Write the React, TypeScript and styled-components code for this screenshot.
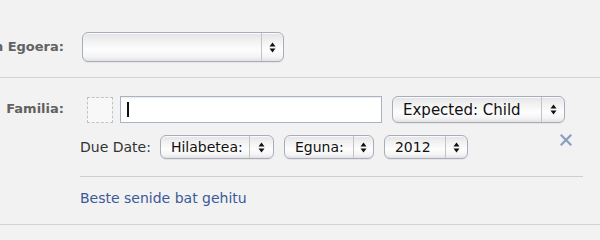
import React from "react";
import styled, { createGlobalStyle } from "styled-components";

const Global = createGlobalStyle`
  html, body { margin: 0; padding: 0; background: #f2f2f2; }
  body { font-family: "DejaVu Sans", "Lucida Grande", Verdana, sans-serif; font-size: 14px; color: #333; }
  * { box-sizing: border-box; }
`;

const Page = styled.div`
  width: 600px;
  height: 229px;
  overflow: hidden;
  background: #f2f2f2;
`;

const TopSection = styled.div`
  height: 78px;
  padding-top: 32px;
  border-bottom: 1px solid #d3d3d3;
`;

const FamilySection = styled.div`
  padding-top: 18px;
  padding-bottom: 17px;
  border-bottom: 1px solid #d3d3d3;
`;

const Row = styled.div<{ $align?: string }>`
  display: flex;
  align-items: ${(p) => p.$align ?? "center"};
`;

const Label = styled.div<{ $pt?: number }>`
  width: 64px;
  flex: none;
  display: flex;
  justify-content: flex-end;
  white-space: nowrap;
  font-weight: bold;
  color: #626262;
  font-size: 13px;
  line-height: 16px;
  padding-top: ${(p) => p.$pt ?? 0}px;
`;

const Content = styled.div`
  margin-left: 16px;
  width: 503px;
  display: flex;
  flex-direction: column;
`;

const SelectBox = styled.div<{ $w: number; $h: number; $ml?: number }>`
  width: ${(p) => p.$w}px;
  height: ${(p) => p.$h}px;
  margin-left: ${(p) => p.$ml ?? 0}px;
  flex: none;
  display: flex;
  border: 1px solid #a6aebd;
  border-radius: 6px;
  background: linear-gradient(to bottom, #e3e3e3 0%, #f0f0f0 25%, #fdfdfd 60%, #f4f4f4 85%, #e2e2e2 100%);
  box-shadow: inset 0 1px 0 rgba(255,255,255,0.8), 0 1px 1px rgba(0,0,0,0.06);
  overflow: hidden;
`;

const SelectText = styled.div<{ $fs: number }>`
  flex: 1;
  display: flex;
  align-items: center;
  padding-left: 10px;
  font-size: ${(p) => p.$fs}px;
  color: #111;
  white-space: nowrap;
`;

const ArrowArea = styled.div<{ $w: number }>`
  width: ${(p) => p.$w}px;
  flex: none;
  border-left: 1px solid #c4c4c4;
  display: flex;
  align-items: center;
  justify-content: center;
`;

const Arrows = () => (
  <svg width="7" height="11" viewBox="0 0 7 11">
    <path d="M3.5 0.5 L6.5 4.5 L0.5 4.5 Z" fill="#111" />
    <path d="M3.5 10.5 L6.5 6.5 L0.5 6.5 Z" fill="#111" />
  </svg>
);

const Select = ({ w, h, aw, ml, fs = 14, children }: { w: number; h: number; aw: number; ml?: number; fs?: number; children?: React.ReactNode }) => (
  <SelectBox $w={w} $h={h} $ml={ml}>
    <SelectText $fs={fs}>{children}</SelectText>
    <ArrowArea $w={aw}>
      <Arrows />
    </ArrowArea>
  </SelectBox>
);

const PhotoSlot = styled.div`
  width: 26px;
  height: 26px;
  margin-left: 7px;
  border: 1px dashed #c2c2c2;
  background: #f8f8f8;
  flex: none;
`;

const NameInput = styled.div`
  width: 262px;
  height: 27px;
  margin-left: 7px;
  flex: none;
  background: #fff;
  border: 1px solid #a9b3c6;
  box-shadow: inset 0 1px 1px rgba(0,0,0,0.08);
  display: flex;
  align-items: center;
  padding-left: 6px;
`;

const Caret = styled.div`
  width: 2px;
  height: 15px;
  background: #111;
`;

const DateRow = styled.div`
  display: flex;
  align-items: center;
  margin-top: 12px;
  gap: 10px;
`;

const DateLabel = styled.div`
  color: #333;
  font-size: 14px;
  line-height: 16px;
  margin-right: -1px;
  white-space: nowrap;
`;

const Remove = styled.div`
  margin-left: auto;
  margin-right: 11px;
  align-self: flex-start;
  margin-top: -1px;
  width: 12px;
  height: 12px;
  display: flex;
`;

const Divider = styled.div`
  height: 1px;
  background: #cfcfcf;
  margin-top: 17px;
`;

const AddLink = styled.a`
  margin-top: 13px;
  color: #3b5998;
  font-size: 14px;
  line-height: 17px;
  text-decoration: none;
  cursor: pointer;
  align-self: flex-start;
`;

export default function App() {
  return (
    <Page>
      <Global />
      <TopSection>
        <Row>
          <Label>Harreman Egoera:</Label>
          <Select w={202} h={30} aw={22} ml={18} />
        </Row>
      </TopSection>
      <FamilySection>
        <Row $align="flex-start">
          <Label $pt={5}>Familia:</Label>
          <Content>
            <Row>
              <PhotoSlot />
              <NameInput>
                <Caret />
              </NameInput>
              <Select w={173} h={27} aw={23} ml={10} fs={15}>Expected: Child</Select>
            </Row>
            <DateRow>
              <DateLabel>Due Date:</DateLabel>
              <Select w={114} h={24} aw={24}>Hilabetea:</Select>
              <Select w={90} h={24} aw={20}>Eguna:</Select>
              <Select w={84} h={24} aw={22}>2012</Select>
              <Remove>
                <svg width="12" height="12" viewBox="0 0 12 12">
                  <path d="M1.5 1.5 L10.5 10.5 M10.5 1.5 L1.5 10.5" stroke="#8c9dc2" strokeWidth="2.2" strokeLinecap="square" />
                </svg>
              </Remove>
            </DateRow>
            <Divider />
            <AddLink>Beste senide bat gehitu</AddLink>
          </Content>
        </Row>
      </FamilySection>
    </Page>
  );
}
